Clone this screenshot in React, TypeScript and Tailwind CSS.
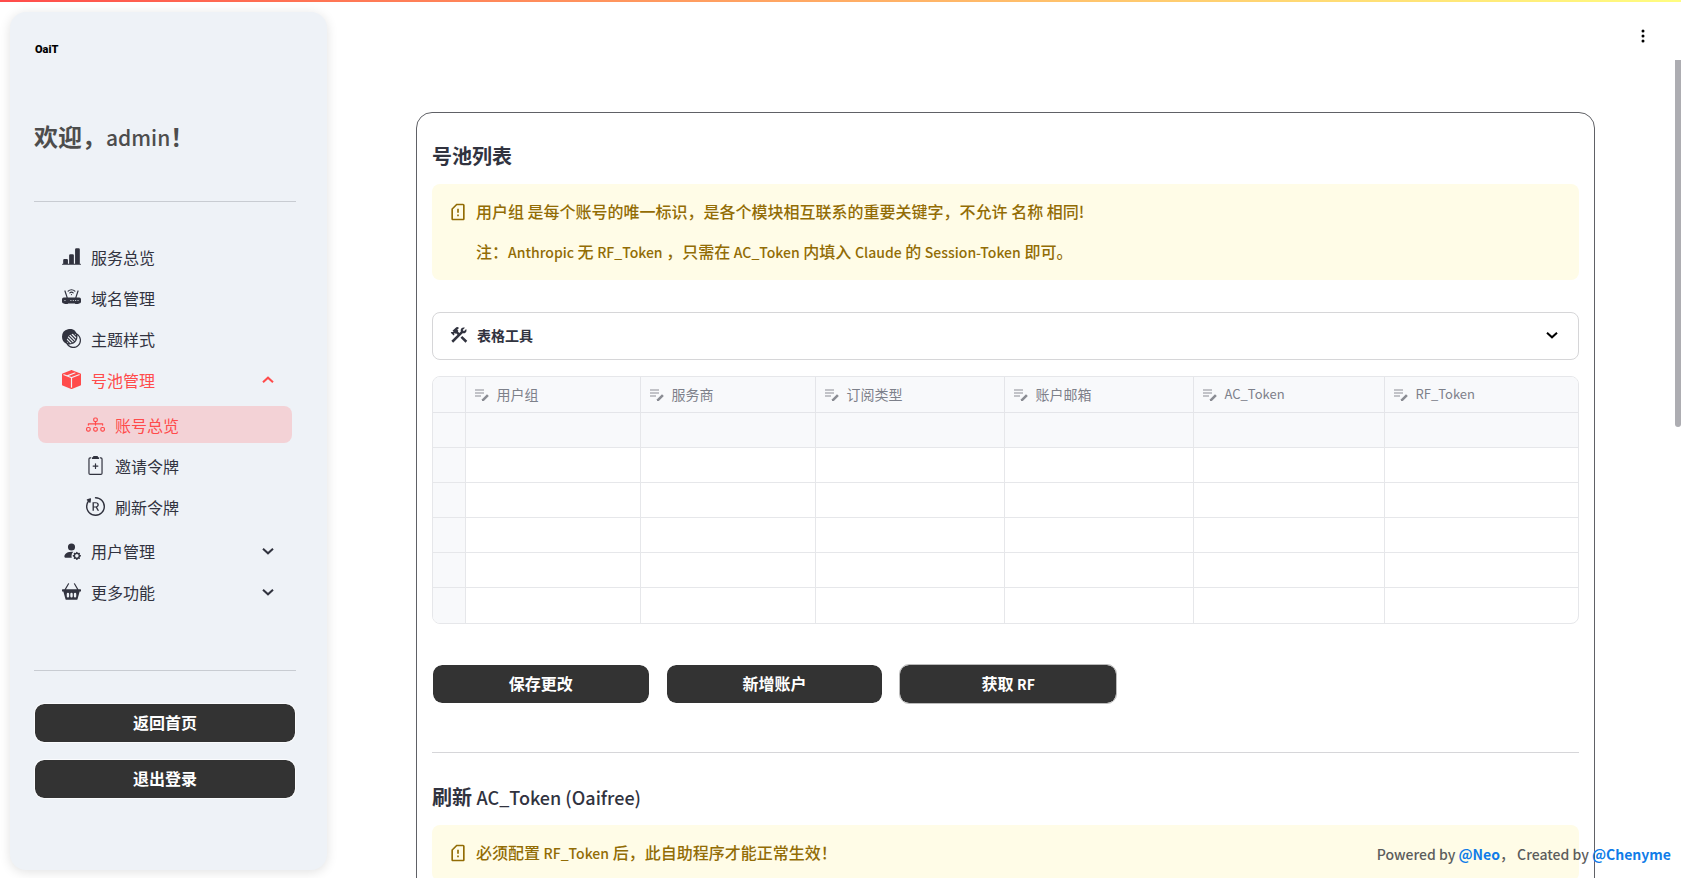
import type { ReactNode } from 'react'
import type { IconType } from 'react-icons'
import {
  BsBarChartLineFill,
  BsBasket2Fill,
  BsBootstrapReboot,
  BsBoxSeamFill,
  BsClipboard2Plus,
  BsDiagram3,
  BsPersonFillGear,
  BsRouterFill,
  BsThreeDotsVertical,
  BsTransparency,
} from 'react-icons/bs'
import { MdConstruction, MdOutlineSdCardAlert } from 'react-icons/md'

type MenuItem = {
  label: string
  icon: IconType
  open?: boolean
  children?: MenuItem[]
}

const menu: MenuItem[] = [
  { label: '服务总览', icon: BsBarChartLineFill },
  { label: '域名管理', icon: BsRouterFill },
  { label: '主题样式', icon: BsTransparency },
  {
    label: '号池管理',
    icon: BsBoxSeamFill,
    open: true,
    children: [
      { label: '账号总览', icon: BsDiagram3 },
      { label: '邀请令牌', icon: BsClipboard2Plus },
      { label: '刷新令牌', icon: BsBootstrapReboot },
    ],
  },
  { label: '用户管理', icon: BsPersonFillGear, children: [] },
  { label: '更多功能', icon: BsBasket2Fill, children: [] },
]

const columns = [
  { label: '用户组', width: 'w-[175px]' },
  { label: '服务商', width: 'w-[175px]' },
  { label: '订阅类型', width: 'w-[189px]' },
  { label: '账户邮箱', width: 'w-[189px]' },
  { label: 'AC_Token', width: 'w-[191px]', latin: true },
  { label: 'RF_Token', width: '', latin: true },
]

function Chevron({ up = false, className = '' }: { up?: boolean; className?: string }) {
  return (
    <svg viewBox="0 0 12 12" className={`size-3 ${className}`} fill="none" stroke="currentColor" strokeWidth="2">
      <path d={up ? 'M1 8.300 6 3.700l5 4.600' : 'M1 3.700l5 4.600 5-4.600'} />
    </svg>
  )
}

function EditNote() {
  return (
    <svg viewBox="0 0 14 12" className="h-3 w-3.5 shrink-0" fill="none">
      <path d="M0 1h9M0 4h9M0 7h6" stroke="#c2c3c8" strokeWidth="2" />
      <path d="M7 12v-1.800l5-5 1.800 1.800-5 5z" fill="#8a8c93" />
    </svg>
  )
}

// Latin runs are set a size below the Chinese text around them
function En({ children }: { children: ReactNode }) {
  return <span className="text-sm">{children}</span>
}

function DarkButton({ children, border = 'border-white/70' }: { children: ReactNode; border?: string }) {
  return (
    <button
      type="button"
      className={`flex h-10 w-full items-center justify-center rounded-[10px] border bg-[#333] bg-clip-padding pb-0.5 text-base font-bold text-white ${border}`}
    >
      {children}
    </button>
  )
}

function Warning({ children }: { children: ReactNode }) {
  return (
    <div className="flex gap-2 rounded-lg bg-[#fffce7] px-4 pt-[15px] pb-[17px] font-medium text-[#926c05]">
      <MdOutlineSdCardAlert className="mt-[3px] size-5 shrink-0" />
      <div className="flex flex-col gap-4 leading-6">{children}</div>
    </div>
  )
}

function Sidebar() {
  return (
    <aside className="mt-3 mb-2 ml-[10px] flex w-[317px] shrink-0 flex-col rounded-2xl bg-[#eef2f7] pr-[31px] pl-6 shadow-[0_2px_12px_rgba(0,0,0,0.12)]">
      <div className="mt-[30px] pl-px font-['Roboto'] text-[11px] leading-4 font-black text-black">OaiT</div>
      <h1 className="mt-15 text-2xl leading-9 font-bold text-[#4d4d4d]">
        欢迎，<span className="text-[21px] font-medium">admin</span>！
      </h1>
      <hr className="mt-[46px] border-[#c8ccd2]" />

      <nav className="mt-[34px] flex flex-col px-1 text-base text-[#31333f]">
        {menu.map((item) => (
          <div key={item.label}>
            <a
              href="#"
              className={`flex h-[41px] items-center gap-2.5 pr-[18px] pl-6 ${item.open ? 'text-[#ff4b4b]' : ''}`}
            >
              <item.icon className="size-[19px]" />
              <span className="flex-1">{item.label}</span>
              {item.children && <Chevron up={item.open} />}
            </a>
            {item.children && item.children.length > 0 && (
              <div className="flex flex-col gap-1 pt-1.5 pb-[5px]">
                {item.children.map((child, i) => (
                  <a
                    key={child.label}
                    href="#"
                    className={`flex h-[37px] items-center gap-2.5 rounded-lg pl-12 ${
                      i === 0 ? 'bg-[#f3d2d6] text-[#ff4b4b]' : ''
                    }`}
                  >
                    <child.icon className="size-[19px]" />
                    {child.label}
                  </a>
                ))}
              </div>
            )}
          </div>
        ))}
      </nav>

      <hr className="mt-[58px] border-[#c8ccd2]" />
      <div className="mt-8 flex flex-col gap-4">
        <DarkButton>返回首页</DarkButton>
        <DarkButton>退出登录</DarkButton>
      </div>
    </aside>
  )
}

function AccountTable() {
  return (
    <div className="mt-4 overflow-hidden rounded-lg border border-[#e6e7ea]">
      <table className="w-full table-fixed border-collapse text-left text-sm text-[#7d808a]">
        <thead>
          <tr className="h-[35px] bg-[#f8f9fb]">
            <th aria-label="选择" className="w-8 border-r border-b border-[#e4e5e9]" />
            {columns.map((col) => (
              <th
                key={col.label}
                className={`border-r border-b border-[#e4e5e9] px-[9px] pt-px font-normal last:border-r-0 ${col.width}`}
              >
                <div className="flex items-center gap-2">
                  <EditNote />
                  <span className={col.latin ? 'text-[13px]' : 'pb-px'}>{col.label}</span>
                </div>
              </th>
            ))}
          </tr>
        </thead>
        <tbody>
          {[0, 1, 2, 3, 4, 5].map((row) => (
            <tr key={row} className="h-[35px] border-b border-[#e6e7ea] first:bg-[#f8f9fb] last:h-9 last:border-b-0">
              <td className="border-r border-[#e6e7ea] bg-[#f8f9fb]" />
              {columns.map((col) => (
                <td key={col.label} className="border-r border-[#e6e7ea] last:border-r-0" />
              ))}
            </tr>
          ))}
        </tbody>
      </table>
    </div>
  )
}

export default function App() {
  return (
    <div className="relative flex h-screen overflow-hidden bg-white font-['Noto_Sans_CJK_SC',sans-serif] text-[#31333f]">
      <div className="absolute inset-x-0 top-0 h-0.5 bg-linear-to-r from-[#ff4b4b] to-[#fffd80]" />
      <Sidebar />

      <main className="min-w-0 flex-1 overflow-hidden pt-28 pr-[86px] pl-[89px]">
        <section className="rounded-2xl border border-[#606166] px-[15px] pt-[27px] pb-10">
          <h2 className="text-xl leading-8 font-bold">号池列表</h2>
          <div className="mt-3">
            <Warning>
              <p>用户组 是每个账号的唯一标识，是各个模块相互联系的重要关键字，不允许 名称 相同!</p>
              <p>
                注：<En>Anthropic</En> 无 <En>RF_Token</En> ，只需在 <En>AC_Token</En> 内填入 <En>Claude</En> 的{' '}
                <En>Session-Token</En> 即可。
              </p>
            </Warning>
          </div>

          <button
            type="button"
            className="mt-8 flex h-12 w-full items-center gap-2 rounded-lg border border-[#d6d6d8] pr-5 pb-0.5 pl-4 text-sm font-bold"
          >
            <MdConstruction className="size-5" />
            <span className="flex-1 text-left">表格工具</span>
            <Chevron className="text-black" />
          </button>

          <AccountTable />

          <div className="mt-10 grid w-[685px] grid-cols-3 gap-4">
            <DarkButton>保存更改</DarkButton>
            <DarkButton>新增账户</DarkButton>
            <DarkButton border="border-[#bbb]">
              <span>
                获取 <En>RF</En>
              </span>
            </DarkButton>
          </div>

          <hr className="mt-12 border-[#d6d6d9]" />
          <h2 className="mt-7 text-xl leading-8 font-bold">
            刷新 <span className="text-lg font-medium">AC_Token (Oaifree)</span>
          </h2>
          <div className="mt-3">
            <Warning>
              <p>
                必须配置 <En>RF_Token</En> 后，此自助程序才能正常生效！
              </p>
            </Warning>
          </div>
        </section>
      </main>

      <button type="button" aria-label="菜单" className="absolute top-7 right-[30px] text-black">
        <BsThreeDotsVertical className="size-4" />
      </button>
      <div className="absolute top-[60px] right-0 h-[367px] w-1.5 rounded-b-full bg-[#adadb2]" />
      <footer className="absolute right-2.5 bottom-3 text-sm leading-6 font-medium text-[#5c5c5c]">
        Powered by{' '}
        <a href="#" className="font-bold text-[#0f7ce8]">
          @Neo
        </a>
        ， Created by{' '}
        <a href="#" className="font-bold text-[#0f7ce8]">
          @Chenyme
        </a>
      </footer>
    </div>
  )
}
